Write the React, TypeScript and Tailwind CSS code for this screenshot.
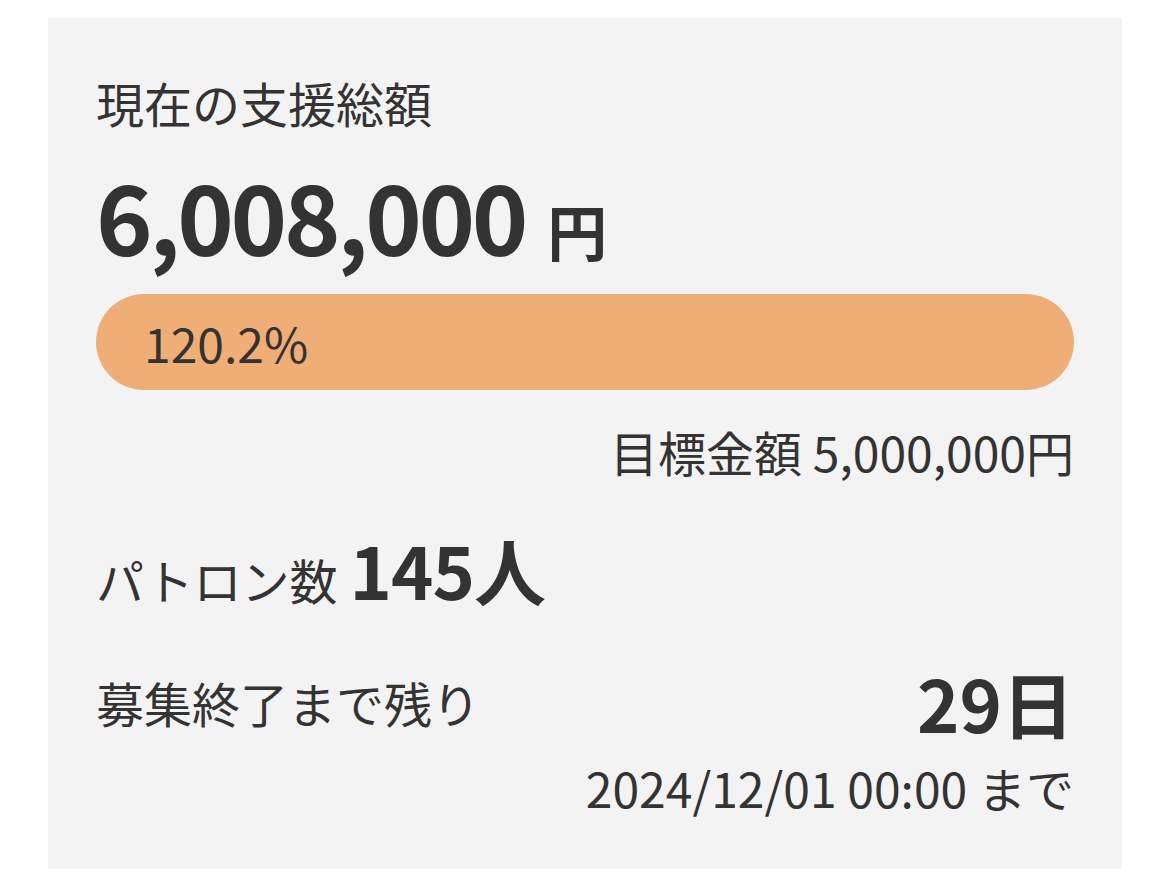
const stats = {
  total: "6,008,000",
  rate: "120.2%",
  goal: "5,000,000円",
  patrons: "145人",
  daysLeft: "29日",
  deadline: "2024/12/01 00:00 まで",
};

export default function App() {
  return (
    <div
      className="min-h-screen bg-white pt-[18px] pl-[48px] text-[#333333]"
      style={{ fontFamily: '"Noto Sans CJK JP", "Noto Sans", sans-serif' }}
    >
      <section className="w-[1074px] bg-[#f3f3f3] px-12 pt-12 pb-[46px]">
        <h2 className="text-[48px] leading-[72px] font-normal">現在の支援総額</h2>

        <div className="mt-[29px] flex items-baseline">
          <span className="text-[96px] leading-none font-bold tracking-[-3.3px]">{stats.total}</span>
          <span className="ml-[22px] text-[60px] leading-none font-bold">円</span>
        </div>

        <div className="mt-[31px] h-[96px] rounded-full bg-[#efae75] px-12 text-[48px] leading-[96px]">
          {stats.rate}
        </div>

        <p className="mt-[25px] text-right text-[48px] leading-[72px]">目標金額 {stats.goal}</p>

        <div className="mt-[46px] flex items-baseline">
          <span className="text-[48px] leading-[72px]">パトロン数</span>
          <span className="ml-3 text-[72px] leading-none font-bold tracking-[-1px]">{stats.patrons}</span>
        </div>

        <div className="mt-[51px] flex items-start justify-between">
          <span className="text-[48px] leading-[72px]">募集終了まで残り</span>
          <span className="text-[72px] leading-none font-bold">{stats.daysLeft}</span>
        </div>
        <p className="mt-[13px] text-right text-[48px] leading-[72px]">{stats.deadline}</p>
      </section>
    </div>
  );
}
